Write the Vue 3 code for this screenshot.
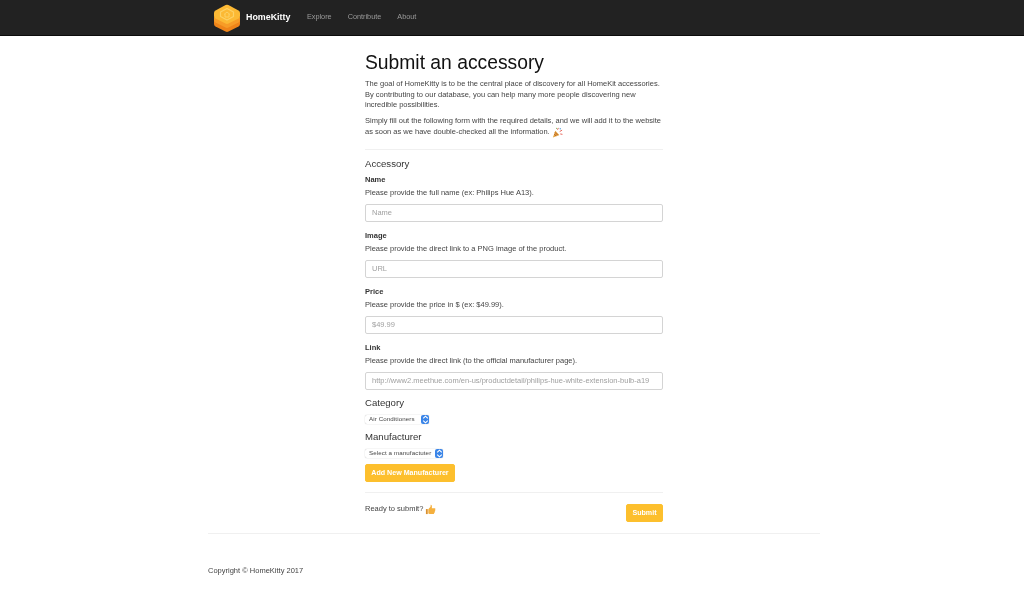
<template>
  <div class="page">
    <nav class="navbar">
      <div class="nav-inner">
        <a class="brand">
          <svg class="logo" width="28" height="28" viewBox="0 0 28 28">
            <path d="M14 8 L25.5 14.5 Q27 15.4 27 17 V20 Q27 21.6 25.5 22.4 L15.5 27.6 Q14 28.2 12.5 27.6 L2.5 22.4 Q1 21.6 1 20 V17 Q1 15.4 2.5 14.5 Z" fill="#ef8419" />
            <path d="M14 5 L25.5 11.5 Q27 12.4 27 14 V16 Q27 17.6 25.5 18.4 L15.5 23.6 Q14 24.2 12.5 23.6 L2.5 18.4 Q1 17.6 1 16 V14 Q1 12.4 2.5 11.5 Z" fill="#f79c27" />
            <path d="M12.6 1 Q14 .4 15.4 1 L25.5 6.5 Q27 7.4 27 9 V12 Q27 13.6 25.5 14.4 L15.5 19.6 Q14 20.2 12.5 19.6 L2.5 14.4 Q1 13.6 1 12 V9 Q1 7.4 2.5 6.5 Z" fill="#fcb934" />
            <path d="M14 4.5 L20.5 8 V12.5 L14 16 L7.5 12.5 V8 Z" fill="none" stroke="#fdd165" stroke-width="1.2" stroke-linejoin="round" />
            <path d="M11 10.5 L14 8 L17 10.5 M12 10 V13 H16 V10" fill="none" stroke="#fdd165" stroke-width="1" />
          </svg>
          <span>HomeKitty</span>
        </a>
        <a class="nav-link">Explore</a>
        <a class="nav-link">Contribute</a>
        <a class="nav-link">About</a>
      </div>
    </nav>

    <div class="container">
      <main class="content">
        <h1>Submit an accessory</h1>
        <p class="intro">The goal of HomeKitty is to be the central place of discovery for all HomeKit accessories. By contributing to our database, you can help many more people discovering new incredible possibilities.</p>
        <p class="intro second">
          Simply fill out the following form with the required details, and we will add it to the website as soon as we have double-checked all the information.
          <svg class="emoji" width="11" height="11" viewBox="0 0 12 12">
            <path d="M1 11.5 L3.6 4 L8 8.6 Z" fill="#e0a23c" />
            <path d="M2.4 7.8 L4.6 10 M3.2 5.8 L6.4 9" stroke="#b5562a" stroke-width="0.9" />
            <path d="M6 3 L7 1 M8.4 5 L11 3.4 M9 7.6 L11.4 8" stroke="#e2574c" stroke-width="1" />
            <circle cx="9" cy="2" r="0.8" fill="#5aa6e0" />
            <circle cx="5" cy="1.4" r="0.7" fill="#7fbf5a" />
          </svg>
        </p>
        <hr class="rule first" />

        <h2 class="section">Accessory</h2>
        <div v-for="field in fields" :key="field.label" class="field">
          <label>{{ field.label }}</label>
          <p class="help">{{ field.help }}</p>
          <input type="text" :placeholder="field.placeholder" />
        </div>

        <h2 class="group-title category">Category</h2>
        <div class="select cat-select">
          <span>Air Conditioners</span>
          <span class="stepper">
            <svg width="7" height="9" viewBox="0 0 7 9"><path d="M1.2 3.4 L3.5 1.2 L5.8 3.4 M1.2 5.6 L3.5 7.8 L5.8 5.6" fill="none" stroke="#fff" stroke-width="1.1" /></svg>
          </span>
        </div>

        <h2 class="group-title manufacturer">Manufacturer</h2>
        <div class="select man-select">
          <span>Select a manufactuter</span>
          <span class="stepper">
            <svg width="7" height="9" viewBox="0 0 7 9"><path d="M1.2 3.4 L3.5 1.2 L5.8 3.4 M1.2 5.6 L3.5 7.8 L5.8 5.6" fill="none" stroke="#fff" stroke-width="1.1" /></svg>
          </span>
        </div>
        <button class="btn add-btn">Add New Manufacturer</button>
        <hr class="rule second-rule" />

        <div class="submit-row">
          <span class="ready">
            Ready to submit?
            <svg class="emoji" width="11" height="11" viewBox="0 0 12 12">
              <path d="M1 5.5 H3 V11 H1 Z" fill="#d9912f" />
              <path d="M3.6 5.6 L6 3 L6.2 .8 C7.4 .6 7.8 2 7.4 4.6 H10.6 C11.6 4.8 11.5 6 11 6.4 C11.4 7.2 11 8 10.6 8.2 C10.8 9 10.4 9.6 10 9.8 C10 10.8 9.4 11 8.8 11 H5 L3.6 10.4 Z" fill="#f5b03e" />
            </svg>
          </span>
          <button class="btn submit-btn">Submit</button>
        </div>
      </main>

      <hr class="rule footer-rule" />
      <footer>Copyright © HomeKitty 2017</footer>
    </div>
  </div>
</template>

<script setup>
const fields = [
  { label: 'Name', help: 'Please provide the full name (ex: Philips Hue A13).', placeholder: 'Name' },
  { label: 'Image', help: 'Please provide the direct link to a PNG image of the product.', placeholder: 'URL' },
  { label: 'Price', help: 'Please provide the price in $ (ex: $49.99).', placeholder: '$49.99' },
  { label: 'Link', help: 'Please provide the direct link (to the official manufacturer page).', placeholder: 'http://www2.meethue.com/en-us/productdetail/philips-hue-white-extension-bulb-a19' }
];
</script>

<style>
html, body {
  margin: 0;
  background: #fff;
}
</style>

<style scoped>
.page {
  font-family: "Liberation Sans", Arial, sans-serif;
  font-size: 7.5px;
  line-height: 10.5px;
  color: #444;
  height: 592px;
  overflow: hidden;
  filter: blur(0.25px);
}

.navbar {
  height: 35px;
  background: #222;
  border-bottom: 1px solid #0c0c0c;
}

.nav-inner {
  margin-left: 213px;
  display: flex;
  align-items: center;
  height: 35px;
}

.brand {
  display: flex;
  align-items: center;
  gap: 5px;
  color: #fff;
  font-size: 8.9px;
  font-weight: bold;
  margin-right: 16.5px;
}

.nav-link {
  color: #9a9a9a;
  font-size: 7.3px;
  margin-right: 16px;
}

.container {
  width: 612px;
  margin-left: 208px;
}

.content {
  width: 298px;
  margin: 0 auto;
}

h1 {
  margin: 14px 0 0;
  font-size: 19.3px;
  line-height: 25px;
  font-weight: 400;
  color: #111;
}

.intro {
  margin: 4px 0 0;
}

.intro.second {
  margin-top: 5.5px;
}

.emoji {
  vertical-align: -2px;
  margin: -2px 0;
}

.rule {
  border: 0;
  border-top: 1px solid #f0f0f0;
  margin: 0;
}

.first {
  margin-top: 11.5px;
}

.section {
  margin: 8px 0 0;
  font-size: 9.6px;
  line-height: 12px;
  font-weight: 400;
  color: #333;
}

.field {
  margin-top: 4.5px;
}

.field + .field {
  margin-top: 8px;
}

label {
  display: block;
  font-weight: bold;
  color: #333;
  line-height: 11px;
}

.help {
  margin: 2.5px 0 0;
}

input {
  display: block;
  box-sizing: border-box;
  width: 298px;
  height: 18.5px;
  margin-top: 5.5px;
  padding: 0 6px;
  border: 1px solid #d4d4d4;
  border-radius: 2px;
  font: 7.5px "Liberation Sans", Arial, sans-serif;
  background: #fff;
}

input::placeholder {
  color: #a0a0a0;
  opacity: 1;
}

.group-title {
  margin: 0;
  font-size: 9.6px;
  line-height: 12px;
  font-weight: 400;
  color: #333;
}

.category {
  margin-top: 6.5px;
}

.manufacturer {
  margin-top: 7px;
}

.select {
  display: flex;
  align-items: center;
  justify-content: space-between;
  box-sizing: border-box;
  height: 9px;
  margin-top: 6px;
  padding-left: 4px;
  background: #fff;
  border-radius: 2px;
  box-shadow: 0 0 1px rgba(0, 0, 0, 0.35);
  font-size: 6.2px;
  letter-spacing: 0.1px;
  color: #444;
}

.cat-select {
  width: 64px;
}

.man-select {
  width: 78px;
}

.stepper {
  display: flex;
  align-items: center;
  justify-content: center;
  width: 8px;
  height: 9px;
  background: #3a85e8;
  border-radius: 2px;
}

.btn {
  display: block;
  box-sizing: border-box;
  height: 18px;
  padding: 0;
  border: 1px solid #fcc02e;
  border-radius: 2px;
  background: #fdbf2d;
  color: #fff;
  font: bold 7.1px "Liberation Sans", Arial, sans-serif;
  white-space: nowrap;
}

.add-btn {
  width: 90px;
  margin-top: 6px;
}

.second-rule {
  margin-top: 10.5px;
}

.submit-row {
  display: flex;
  justify-content: space-between;
  align-items: flex-start;
  margin-top: 10px;
  padding-bottom: 11px;
}

.ready {
  line-height: 12px;
}

.submit-btn {
  width: 37px;
  margin-top: 1px;
}

footer {
  margin-top: 32px;
}
</style>
